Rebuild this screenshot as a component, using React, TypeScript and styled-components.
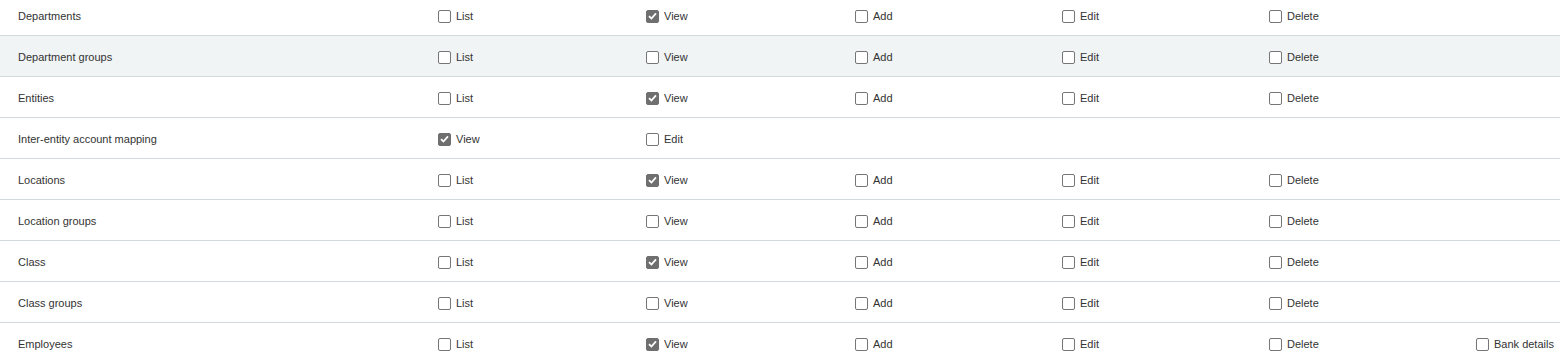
import React from "react";
import styled, { createGlobalStyle } from "styled-components";

const Global = createGlobalStyle`
  html, body { margin: 0; padding: 0; background: #ffffff; }
  body { font-family: "Liberation Sans", Arial, sans-serif; overflow: hidden; }
`;

const Table = styled.div`
  width: 1560px;
  margin-top: -5px;
  display: flex;
  flex-direction: column;
`;

const Row = styled.div<{ $highlight?: boolean }>`
  box-sizing: border-box;
  display: grid;
  grid-template-columns: 420px 208px 209px 207px 207px 207px 1fr;
  height: 41px;
  padding-top: 2px;
  border-bottom: 1px solid #d3dadd;
  background: ${(p) => (p.$highlight ? "#f0f4f5" : "#ffffff")};
  align-items: center;
`;

const Name = styled.div`
  padding-left: 18px;
  font-size: 11px;
  color: #333333;
`;

const Cell = styled.label`
  padding-left: 18px;
  display: flex;
  align-items: center;
  gap: 5px;
  font-size: 11px;
  color: #333333;
`;

const Box = styled.span<{ $checked?: boolean }>`
  box-sizing: border-box;
  width: 13px;
  height: 13px;
  border-radius: 2px;
  border: 1px solid ${(p) => (p.$checked ? "#6f6f6f" : "#767676")};
  background: ${(p) => (p.$checked ? "#6f6f6f" : "#ffffff")};
  display: flex;
  align-items: center;
  justify-content: center;
`;

type Perm = { label: string; checked?: boolean };

const Check: React.FC<Perm> = ({ label, checked }) => (
  <Cell>
    <Box $checked={checked}>
      {checked && (
        <svg width="9" height="8" viewBox="0 0 9 8">
          <path d="M1 4.2 L3.4 6.5 L8 1.3" fill="none" stroke="#ffffff" strokeWidth="1.8" />
        </svg>
      )}
    </Box>
    {label}
  </Cell>
);

const std = (view: boolean): Perm[] => [
  { label: "List" },
  { label: "View", checked: view },
  { label: "Add" },
  { label: "Edit" },
  { label: "Delete" },
];

const rows: { name: string; perms: Perm[]; highlight?: boolean }[] = [
  { name: "Departments", perms: std(true) },
  { name: "Department groups", perms: std(false), highlight: true },
  { name: "Entities", perms: std(true) },
  { name: "Inter-entity account mapping", perms: [{ label: "View", checked: true }, { label: "Edit" }] },
  { name: "Locations", perms: std(true) },
  { name: "Location groups", perms: std(false) },
  { name: "Class", perms: std(true) },
  { name: "Class groups", perms: std(false) },
  { name: "Employees", perms: [...std(true), { label: "Bank details" }] },
];

export default function App() {
  return (
    <>
      <Global />
      <Table>
        {rows.map((r) => (
          <Row key={r.name} $highlight={r.highlight}>
            <Name>{r.name}</Name>
            {r.perms.map((p, i) => (
              <Check key={i} label={p.label} checked={p.checked} />
            ))}
          </Row>
        ))}
      </Table>
    </>
  );
}
